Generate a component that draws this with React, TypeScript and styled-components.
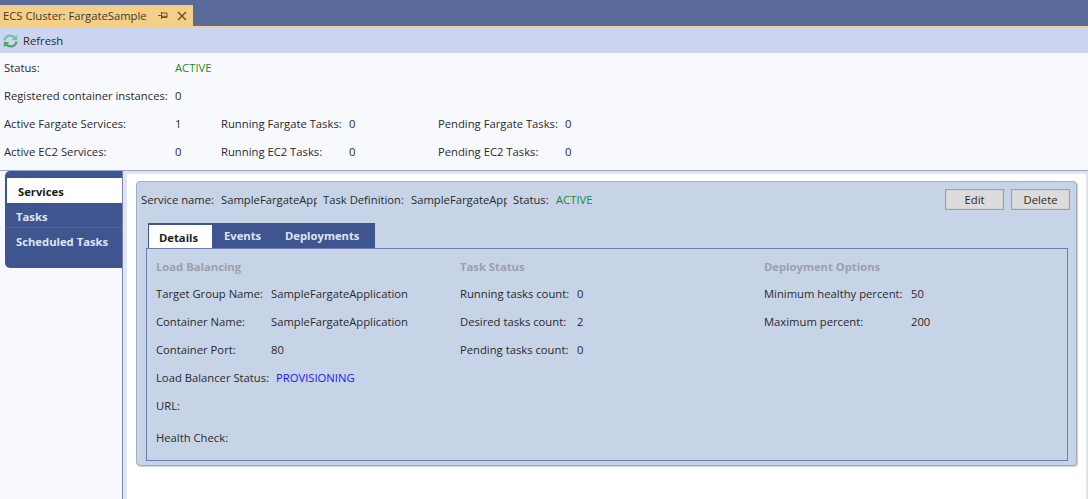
import React from "react";
import styled, { createGlobalStyle } from "styled-components";

const Global = createGlobalStyle`
  html, body { margin: 0; padding: 0; background: #f8f9fe; }
  body { font-family: "Open Sans", "Noto Sans", sans-serif; font-size: 11.25px; color: #2a2a2a; }
  #root { width: 1088px; height: 499px; overflow: hidden; }
`;

const Page = styled.div`
  width: 1088px; height: 499px; display: flex; flex-direction: column; overflow: hidden;
`;
const TabStrip = styled.div`
  height: 26px; background: #5a6a99; display: flex; align-items: flex-end; flex: none;
  border-bottom: 2px solid #f5cf86;
`;
const DocTab = styled.div`
  width: 193px; height: 21px; background: #f5cf86; display: flex; align-items: center;
  padding-left: 3px; box-sizing: border-box; color: #3a3a3a;
`;
const DocTitle = styled.span`
  width: 155px; white-space: nowrap;
`;
const DocIcons = styled.span`
  display: flex; align-items: center; gap: 9px;
`;
const Toolbar = styled.div`
  height: 25px; flex: none; background: #ccd5f0; display: flex; align-items: center; gap: 5px; padding-left: 3px;
`;
const Info = styled.div`
  display: grid; grid-template-columns: 171px 46px 128px 89px 127px 1fr; grid-auto-rows: 28px;
  align-items: center; padding: 0 0 0 4px; height: 117px; box-sizing: border-box; flex: none;
`;
const RowStart = styled.span`
  grid-column: 1;
`;
const Green = styled.span`
  color: #1c8c2c;
`;
const Blue = styled.span`
  color: #1a1af0;
`;
const Body = styled.div`
  flex: 1; display: flex; border-top: 1px solid #98a5cc; min-height: 0;
`;
const Nav = styled.div`
  width: 117px; margin: 0 0 0 5px; height: 97px; background: #3f5590; border-radius: 5px 0 0 5px;
  padding-top: 7px; box-sizing: border-box; flex: none; display: flex; flex-direction: column;
`;
const NavItem = styled.div<{ $active?: boolean }>`
  height: 25px; box-sizing: border-box; display: flex; align-items: center; font-weight: 700;
  padding: 2px 0 0 11px; margin-left: ${p => (p.$active ? 2 : 0)}px;
  background: ${p => (p.$active ? "#ffffff" : "transparent")};
  color: ${p => (p.$active ? "#1c1c1c" : "#dfe5f5")};
  border-bottom: ${p => (p.$active ? "none" : "1px solid #4c6199")};
  &:last-child { border-bottom: none; }
`;
const Main = styled.div`
  flex: 1; min-width: 0; background: #fff; border-left: 1px solid #7385b5;
  border-right: 2px solid #e0e3ee; box-shadow: inset 4px 3px 0 #e2e5f1;
  padding: 10px 9px 0 13px; box-sizing: border-box;
`;
const Card = styled.div`
  height: 285px; background: #c7d4e8; border: 1px solid #a0adc6; border-radius: 4px; box-sizing: border-box;
  box-shadow: 1px 1px 1px #c9ccd6; padding: 6px 6px 0 4px; display: flex; flex-direction: column;
`;
const CardHead = styled.div`
  height: 22px; display: flex; align-items: center; flex: none;
`;
const Clip = styled.span<{ $w: number }>`
  width: ${p => p.$w}px; overflow: hidden; white-space: nowrap; flex: none;
`;
const Spacer = styled.div`
  flex: 1;
`;
const Btn = styled.button`
  width: 59px; height: 21px; background: #dcdcdc; border: 1px solid #a0a0a0; font: inherit; color: #2a2a2a;
  margin-left: 7px; padding: 0; box-shadow: inset 0 0 0 1px #d4d4d4;
`;
const Tabs = styled.div`
  margin: 13px 0 0 7px; width: 227px; height: 25px; background: #3f5590; display: flex; align-items: flex-end;
  padding-left: 1px; box-sizing: border-box; flex: none;
`;
const Tab = styled.div<{ $active?: boolean; $w: number }>`
  width: ${p => p.$w}px; height: 23px; display: flex; align-items: center; font-weight: 700;
  padding: ${p => (p.$active ? "2px 0 0 10px" : "0 0 2px 0")}; box-sizing: border-box;
  background: ${p => (p.$active ? "#fff" : "transparent")};
  color: ${p => (p.$active ? "#1c1c1c" : "#dfe5f5")};
`;
const Gap = styled.div<{ $w: number }>`
  width: ${p => p.$w}px; flex: none;
`;
const Panel = styled.div`
  margin-left: 5px; height: 213px; width: 922px; box-sizing: border-box; border: 1px solid #6b7db0;
  display: grid; grid-template-columns: 304px 304px 1fr; padding: 4px 0 0 9px;
`;
const Column = styled.div`
  display: flex; flex-direction: column;
`;
const Heading = styled.div`
  height: 26px; display: flex; align-items: center; font-weight: 700; color: #9ba0ad;
`;
const Row = styled.div<{ $gap?: number }>`
  height: 28px; display: flex; align-items: center; margin-top: ${p => p.$gap ?? 0}px; white-space: nowrap;
`;
const Label = styled.span<{ $w: number }>`
  width: ${p => p.$w}px; flex: none;
`;

const RefreshIcon = () => (
  <svg width="15" height="14" viewBox="0 0 15 14" fill="none">
    <path d="M1.5 6.5C2 3 5 1.4 7.5 1.6 9.5 1.7 10.8 2.6 11.6 3.6" stroke="#66c9a0" strokeWidth="2.4" />
    <path d="M14.2 0.6v5.4H8.8z" fill="#66c9a0" />
    <path d="M13.5 7.5C13 11 10 12.6 7.5 12.4 5.5 12.3 4.2 11.4 3.4 10.4" stroke="#45a868" strokeWidth="2.4" />
    <path d="M0.8 13.4V8h5.4z" fill="#45a868" />
  </svg>
);
const PinIcon = () => (
  <svg width="10" height="9" viewBox="0 0 10 9" fill="none" stroke="#6b5230" strokeWidth="1">
    <path d="M0 4.5h3.5M3.5 1v7M3.5 2h5.5v4.5H3.5M3.5 5.3h5.5" />
  </svg>
);
const CloseIcon = () => (
  <svg width="10" height="10" viewBox="0 0 10 10" fill="none" stroke="#6b5230" strokeWidth="1.5">
    <path d="M1 1l8 8M9 1l-8 8" />
  </svg>
);

export default function App() {
  return (
    <Page>
      <Global />
      <TabStrip>
        <DocTab>
          <DocTitle>ECS Cluster: FargateSample</DocTitle>
          <DocIcons><PinIcon /><CloseIcon /></DocIcons>
        </DocTab>
      </TabStrip>
      <Toolbar><RefreshIcon /><span>Refresh</span></Toolbar>
      <Info>
        <RowStart>Status:</RowStart><Green>ACTIVE</Green>
        <RowStart>Registered container instances:</RowStart><span>0</span>
        <RowStart>Active Fargate Services:</RowStart><span>1</span>
        <span>Running Fargate Tasks:</span><span>0</span>
        <span>Pending Fargate Tasks:</span><span>0</span>
        <RowStart>Active EC2 Services:</RowStart><span>0</span>
        <span>Running EC2 Tasks:</span><span>0</span>
        <span>Pending EC2 Tasks:</span><span>0</span>
      </Info>
      <Body>
        <Nav>
          <NavItem $active>Services</NavItem>
          <NavItem>Tasks</NavItem>
          <NavItem>Scheduled Tasks</NavItem>
        </Nav>
        <Main>
          <Card>
            <CardHead>
              <Clip $w={80}>Service name:</Clip>
              <Clip $w={96}>SampleFargateApplication</Clip>
              <Gap $w={6} />
              <Clip $w={88}>Task Definition:</Clip>
              <Clip $w={96}>SampleFargateApplication</Clip>
              <Gap $w={6} />
              <Clip $w={43}>Status:</Clip>
              <Green>ACTIVE</Green>
              <Spacer />
              <Btn>Edit</Btn>
              <Btn>Delete</Btn>
            </CardHead>
            <Tabs>
              <Tab $active $w={63}>Details</Tab>
              <Gap $w={12} />
              <Tab $w={61}>Events</Tab>
              <Tab $w={85}>Deployments</Tab>
            </Tabs>
            <Panel>
              <Column>
                <Heading>Load Balancing</Heading>
                <Row><Label $w={115}>Target Group Name:</Label>SampleFargateApplication</Row>
                <Row><Label $w={115}>Container Name:</Label>SampleFargateApplication</Row>
                <Row><Label $w={115}>Container Port:</Label>80</Row>
                <Row><Label $w={120}>Load Balancer Status:</Label><Blue>PROVISIONING</Blue></Row>
                <Row>URL:</Row>
                <Row $gap={4}>Health Check:</Row>
              </Column>
              <Column>
                <Heading>Task Status</Heading>
                <Row><Label $w={117}>Running tasks count:</Label>0</Row>
                <Row><Label $w={117}>Desired tasks count:</Label>2</Row>
                <Row><Label $w={117}>Pending tasks count:</Label>0</Row>
              </Column>
              <Column>
                <Heading>Deployment Options</Heading>
                <Row><Label $w={147}>Minimum healthy percent:</Label>50</Row>
                <Row><Label $w={147}>Maximum percent:</Label>200</Row>
              </Column>
            </Panel>
          </Card>
        </Main>
      </Body>
    </Page>
  );
}
